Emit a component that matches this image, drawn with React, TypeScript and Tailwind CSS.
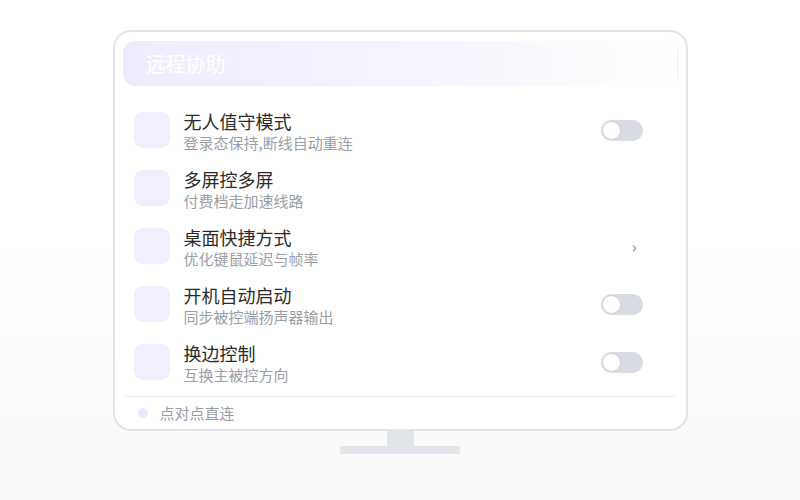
import React from 'react';

interface OptionRow {
  title: string;
  subtitle: string;
  action: 'toggle' | 'chevron' | 'none';
}

const rows: OptionRow[] = [
  { title: '无人值守模式', subtitle: '登录态保持,断线自动重连', action: 'toggle' },
  { title: '多屏控多屏', subtitle: '付费档走加速线路', action: 'none' },
  { title: '桌面快捷方式', subtitle: '优化键鼠延迟与帧率', action: 'chevron' },
  { title: '开机自动启动', subtitle: '同步被控端扬声器输出', action: 'toggle' },
  { title: '换边控制', subtitle: '互换主被控方向', action: 'toggle' },
];

const Toggle: React.FC = () => (
  <div className="flex h-[21px] w-[42px] items-center rounded-full bg-[#d9dce2] pl-[1px]">
    <span className="h-[19px] w-[19px] rounded-full border border-[#d0d3d9] bg-white" />
  </div>
);

const App: React.FC = () => {
  return (
    <div
      className="flex min-h-[500px] w-full flex-col items-center bg-gradient-to-b from-white via-white to-[#f9f9fa] pt-[30px]"
      style={{ fontFamily: '"Noto Sans CJK SC", "Noto Sans", sans-serif' }}
    >
      <div className="flex h-[401px] w-[575px] flex-col rounded-[18px] border-2 border-[#e3e5ea] bg-white px-[8px] pt-[9px]">
        <div className="flex h-[45px] items-center rounded-xl bg-gradient-to-r from-[#efebfc] via-[#f6f4fe] to-white pl-[23px]">
          <span className="text-[20px] font-medium text-white/95">远程协助</span>
          <span className="ml-auto h-[30px] w-px bg-[#efeff3]" />
        </div>

        <div className="mt-[15px] flex flex-col">
          {rows.map((row) => (
            <div key={row.title} className="flex h-[58px] items-center pl-[11px] pr-[35px]">
              <div className="h-[36px] w-[36px] flex-none rounded-[9px] bg-[#f1eefd]" />
              <div className="ml-[14px] flex flex-1 flex-col pt-[2px]">
                <span className="text-[18px] leading-[22px] text-[#2b2b2b]">{row.title}</span>
                <span className="text-[15px] leading-[21px] text-[#9a9ea6]">{row.subtitle}</span>
              </div>
              {row.action === 'toggle' && <Toggle />}
              {row.action === 'chevron' && (
                <div className="flex w-[42px] justify-end pr-[6px] text-[16px] leading-none text-[#8c9099]">›</div>
              )}
            </div>
          ))}
        </div>

        <div className="mx-[2px] mt-[5px] flex h-[32px] items-center gap-[12px] border-t border-[#eceef2] pl-[13px] pt-[1px]">
          <span className="h-[10px] w-[10px] rounded-full bg-[#ece8fb]" />
          <span className="text-[15px] text-[#9a9ea6]">点对点直连</span>
        </div>
      </div>
      <div className="h-[15px] w-[27px] bg-[#e1e4e9]" />
      <div className="h-[8px] w-[120px] bg-[#e1e4e9]" />
    </div>
  );
};

export default App;
